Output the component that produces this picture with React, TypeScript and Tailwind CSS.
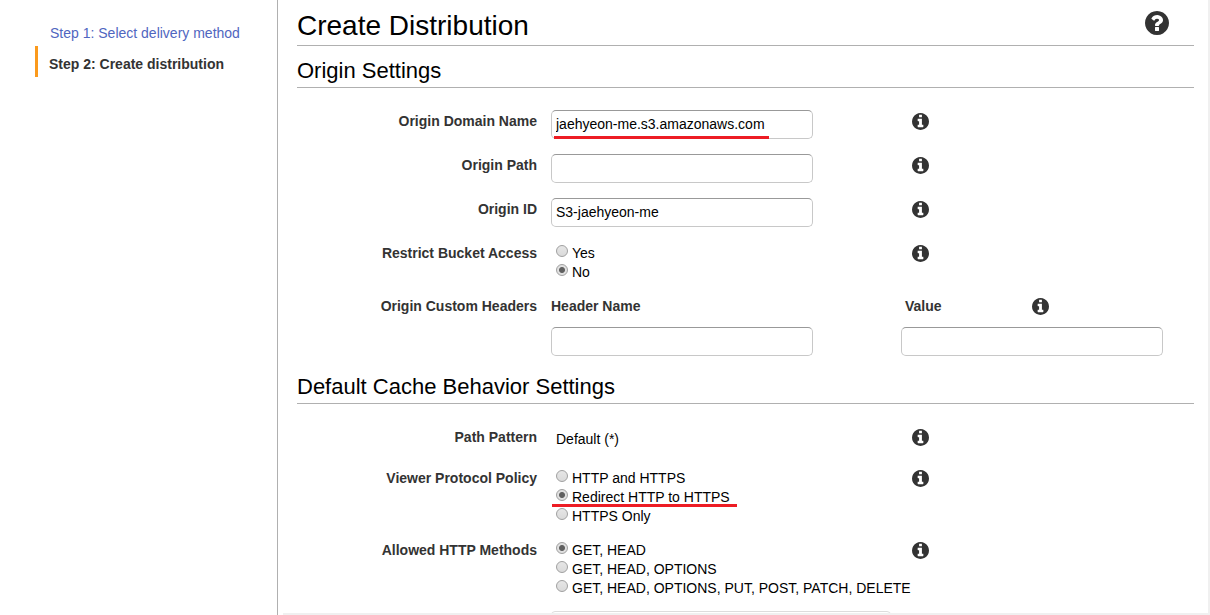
import React from "react";

const DISC =
  "m640 416q0 209-103 385.5t-279.5 279.5-385.5 103-385.5-103-279.5-279.5-103-385.5 103-385.5 279.5-279.5 385.5-103 385.5 103 279.5 279.5 103 385.5z";

function InfoButton({ label }: { label: string }) {
  return (
    <button type="button" aria-label={`About ${label}`} className="flex h-[22px] items-center text-[#333333]">
      <svg viewBox="128 128 1536 1536" className="size-[17px]" fill="currentColor" aria-hidden="true">
        <path
          d={
            "M1152 1376v-160q0-14-9-23t-23-9h-96v-512q0-14-9-23t-23-9h-320q-14 0-23 9t-9 23v160q0 14 9 23t23 9h96v320h-96q-14 0-23 9t-9 23v160q0 14 9 23t23 9h448q14 0 23-9t9-23zm-128-896v-160q0-14-9-23t-23-9h-192q-14 0-23 9t-9 23v160q0 14 9 23t23 9h192q14 0 23-9t9-23z" +
            DISC
          }
        />
      </svg>
    </button>
  );
}

function HelpButton() {
  return (
    <button type="button" aria-label="Help" className="text-[#333333]">
      <svg viewBox="128 128 1536 1536" className="size-6" fill="currentColor" aria-hidden="true">
        <path d="M1024 1376v-192q0-14-9-23t-23-9h-192q-14 0-23 9t-9 23v192q0 14 9 23t23 9h192q14 0 23-9t9-23zm256-672q0-88-55.5-163t-138.5-116-170-41q-243 0-371 213-15 24 8 42l132 100q7 6 19 6 16 0 25-12 53-68 86-92 34-24 86-24 48 0 85.5 26t37.5 59q0 38-20 61t-68 45q-63 28-115.5 86.5t-52.5 125.5v36q0 14 9 23t23 9h192q14 0 23-9t9-23q0-19 21.5-49.5t54.5-49.5q32-18 49-28.5t46-35 44.5-48 28-60.5 12.5-81zm384 192q0 209-103 385.5t-279.5 279.5-385.5 103-385.5-103-279.5-279.5-103-385.5 103-385.5 279.5-279.5 385.5-103 385.5 103 279.5 279.5 103 385.5z" />
      </svg>
    </button>
  );
}

function TextField({ id, value = "" }: { id: string; value?: string }) {
  return (
    <input
      id={id}
      type="text"
      defaultValue={value}
      className="block h-[29px] w-[262px] rounded-[5px] border border-[#c8c8c8] border-t-[#999999] bg-white px-1 pb-[2px] text-black outline-none"
    />
  );
}

function Row({
  label,
  htmlFor,
  children,
  aside,
}: {
  label: string;
  htmlFor?: string;
  children: React.ReactNode;
  aside?: React.ReactNode;
}) {
  const labelClass = "pr-[14px] text-right leading-[22px] font-bold text-[#333333]";
  return (
    <div className="grid grid-cols-[254px_350px_1fr]">
      {htmlFor ? (
        <label htmlFor={htmlFor} className={labelClass}>
          {label}
        </label>
      ) : (
        <div className={labelClass}>{label}</div>
      )}
      <div>{children}</div>
      {aside ?? (
        <div className="pl-[11px]">
          <InfoButton label={label} />
        </div>
      )}
    </div>
  );
}

function RadioGroup({
  name,
  label,
  options,
  selected,
  marked = false,
}: {
  name: string;
  label: string;
  options: string[];
  selected: string;
  marked?: boolean;
}) {
  return (
    <div role="radiogroup" aria-label={label} className="flex flex-col pl-[5px]">
      {options.map((option) => (
        <label key={option} className="relative flex h-[19px] items-start gap-1 self-start whitespace-nowrap">
          <input
            type="radio"
            name={name}
            defaultChecked={option === selected}
            className="mt-[3px] size-3 shrink-0 appearance-none rounded-full border border-[#a0a0a0] bg-linear-to-b from-[#e6e6e6] to-[#dadada] checked:bg-[radial-gradient(circle,#606060_0,#606060_2.5px,#e0e0e0_3.5px)]"
          />
          <span className="leading-[22px]">{option}</span>
          {marked && option === selected && (
            <span className="absolute top-[18px] -left-1 z-10 h-[3px] w-[185px] bg-[#ed1c24]" />
          )}
        </label>
      ))}
    </div>
  );
}

function SectionHeading({ children }: { children: React.ReactNode }) {
  return (
    <h2 className="mb-[22px] border-b border-[#b0b0b0] pt-2 text-[22px] leading-[33px] text-black">{children}</h2>
  );
}

export default function App() {
  return (
    <div className="flex h-screen overflow-hidden bg-white font-['Liberation_Sans',Arial,sans-serif] text-[14px] text-black">
      <nav aria-label="Steps" className="w-[278px] shrink-0 border-r border-[#b0b0b0] pt-[15px] pl-[35px]">
        <ol>
          <li className="h-[31px] border-l-[3px] border-transparent pt-[5px] pl-3 leading-[26px]">
            <a href="#select" className="text-[#5066c0]">
              Step 1: Select delivery method
            </a>
          </li>
          <li
            aria-current="step"
            className="h-[31px] border-l-[3px] border-[#fb9a1c] pt-[5px] pl-[11px] leading-[26px] font-bold text-[#333333]"
          >
            Step 2: Create distribution
          </li>
        </ol>
      </nav>

      <main className="ml-[5px] min-w-0 flex-1 overflow-hidden border-r-2 border-b-2 border-[#f0f0f0] pr-[14px] pl-[14px]">
        <header className="flex items-center justify-between border-b border-[#b0b0b0] pr-[25px]">
          <h1 className="pt-[7px] text-[28px] leading-[38px]">Create Distribution</h1>
          <HelpButton />
        </header>

        <section>
          <SectionHeading>Origin Settings</SectionHeading>
          <form className="flex flex-col gap-[15px]">
            <Row label="Origin Domain Name" htmlFor="domain">
              <div className="relative">
                <TextField id="domain" value="jaehyeon-me.s3.amazonaws.com" />
                <span className="absolute bottom-0 left-[3px] h-[3px] w-[215px] bg-[#ed1c24]" />
              </div>
            </Row>
            <Row label="Origin Path" htmlFor="path">
              <TextField id="path" />
            </Row>
            <Row label="Origin ID" htmlFor="origin-id">
              <TextField id="origin-id" value="S3-jaehyeon-me" />
            </Row>
            <Row label="Restrict Bucket Access">
              <RadioGroup name="restrict" label="Restrict Bucket Access" options={["Yes", "No"]} selected="No" />
            </Row>
            <Row
              label="Origin Custom Headers"
              aside={
                <div className="flex flex-col gap-[10px]">
                  <div className="flex pl-1">
                    <label htmlFor="header-value" className="w-[127px] leading-[22px] font-bold text-[#333333]">
                      Value
                    </label>
                    <InfoButton label="Origin Custom Headers" />
                  </div>
                  <TextField id="header-value" />
                </div>
              }
            >
              <div className="flex flex-col gap-[10px]">
                <label htmlFor="header-name" className="leading-[22px] font-bold text-[#333333]">
                  Header Name
                </label>
                <TextField id="header-name" />
              </div>
            </Row>
          </form>
        </section>

        <section className="mt-[6px]">
          <SectionHeading>Default Cache Behavior Settings</SectionHeading>
          <form className="flex flex-col gap-[15px]">
            <Row label="Path Pattern">
              <div className="pl-[5px] leading-[26px]">Default (*)</div>
            </Row>
            <Row label="Viewer Protocol Policy">
              <RadioGroup
                name="viewer"
                label="Viewer Protocol Policy"
                options={["HTTP and HTTPS", "Redirect HTTP to HTTPS", "HTTPS Only"]}
                selected="Redirect HTTP to HTTPS"
                marked
              />
            </Row>
            <Row label="Allowed HTTP Methods">
              <RadioGroup
                name="methods"
                label="Allowed HTTP Methods"
                options={["GET, HEAD", "GET, HEAD, OPTIONS", "GET, HEAD, OPTIONS, PUT, POST, PATCH, DELETE"]}
                selected="GET, HEAD"
              />
            </Row>
            <div className="ml-[254px] h-10 w-[340px] rounded-[4px] border border-[#dddddd]" />
          </form>
        </section>
      </main>
    </div>
  );
}
